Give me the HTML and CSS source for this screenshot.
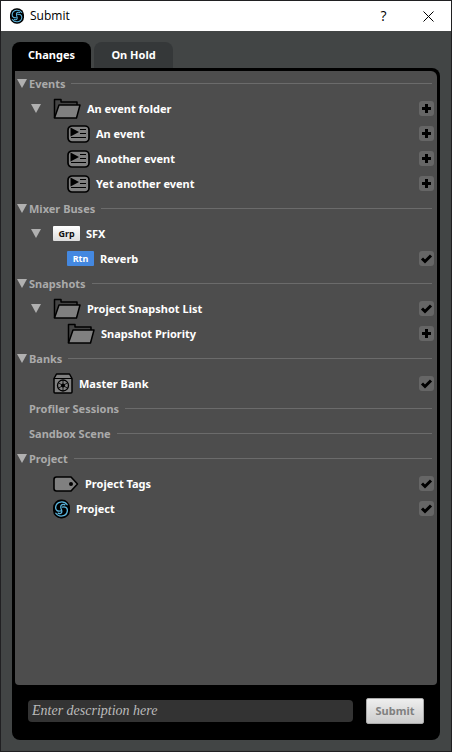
FILE: index.html
```html
<!DOCTYPE html>
<html lang="en">
<head>
<meta charset="utf-8">
<meta name="viewport" content="width=device-width, initial-scale=1">
<title>Submit</title>
<link rel="stylesheet" href="styles.css">
</head>
<body>
<svg class="sprite" aria-hidden="true">
  <symbol id="folder" viewBox="0 0 28 21">
    <path d="M1.500 20V1.500h6.500V4H24v3" fill="#444" stroke="#000" stroke-width="1.500" stroke-linejoin="round"/>
    <path d="M1.500 20L6 7h21L23.500 20z" fill="#808080" stroke="#000" stroke-width="1.500" stroke-linejoin="round"/>
  </symbol>
  <symbol id="event" viewBox="0 0 23 18">
    <rect x="1" y="1" width="21" height="16" rx="4" fill="#808080" stroke="#000" stroke-width="1.700"/>
    <path d="M3.500 2.500v9l8.500-4.500z" fill="#000"/>
    <path d="M13 4.500h6M13 8.500h6M4 12.500h15" stroke="#000" stroke-width="1.200"/>
  </symbol>
  <symbol id="bank" viewBox="0 0 20 21">
    <path d="M1 5.500L3.500 1h13L19 5.500V19q0 1-1 1H2q-1 0-1-1z" fill="#808080" stroke="#000" stroke-width="1.500" stroke-linejoin="round"/>
    <path d="M1 5.500h18" stroke="#000"/>
    <circle cx="10" cy="12.500" r="5.500" fill="none" stroke="#000" stroke-width="1.300"/>
    <path d="M10 7v11M5.200 9.700l9.600 5.600M14.800 9.700l-9.600 5.600" stroke="#000" stroke-width=".8"/>
    <circle cx="10" cy="12.500" r="2"/>
  </symbol>
  <symbol id="tag" viewBox="0 0 26 16">
    <path d="M3.500 1H18l6.500 7L18 15H3.500Q1 15 1 12.500v-9Q1 1 3.500 1z" fill="#808080" stroke="#000" stroke-width="1.600" stroke-linejoin="round"/>
    <circle cx="18" cy="8" r="2"/>
  </symbol>
  <symbol id="logo" viewBox="0 0 18 20">
    <rect width="18" height="20" rx="8.500" fill="#000"/>
    <g fill="none" stroke="#5ab4dc" stroke-width="1.400" stroke-linecap="round">
      <path d="M15 5.500C12 1 3.500 1.500 2.800 8C2.500 11.500 5.500 13 8 12"/>
      <path d="M3 14.500C6 19 14.500 18.500 15.200 12C15.500 8.500 12.500 7 10 8"/>
      <path d="M12.500 5.500C9.500 4.500 7.500 6 8.500 9.500C10.500 14 8.500 15.500 5.500 14.500"/>
    </g>
  </symbol>
  <symbol id="plus" viewBox="0 0 15 15"><path d="M7.500 3v9M3 7.500h9" stroke="#000" stroke-width="3"/></symbol>
  <symbol id="check" viewBox="0 0 15 15"><path d="M3 7.500l3 3 6-6" fill="none" stroke="#000" stroke-width="3"/></symbol>
</svg>

<div class="window">
  <header class="titlebar">
    <svg class="app-icon"><use href="#logo"/></svg>
    <h1 class="title">Submit</h1>
    <button class="caption" type="button" aria-label="Help">?</button>
    <button class="caption" type="button" aria-label="Close"><svg class="close" viewBox="0 0 11 11"><path d="M.5.5l10 10M10.500.5l-10 10" stroke="#000"/></svg></button>
  </header>

  <main class="content">
    <nav class="tabs">
      <button class="tab tab-active" type="button">Changes</button>
      <button class="tab" type="button">On Hold</button>
    </nav>

    <div class="panel">
      <div class="tree">
        <h2 class="section"><button class="arrow" type="button" aria-label="Collapse Events"></button>Events</h2>
        <div class="row"><button class="arrow" type="button" aria-label="Collapse An event folder"></button><svg class="folder"><use href="#folder"/></svg><span class="name">An event folder</span><button class="mark" type="button" aria-label="Add"><svg><use href="#plus"/></svg></button></div>
        <div class="row child"><svg class="event"><use href="#event"/></svg><span class="name">An event</span><button class="mark" type="button" aria-label="Add"><svg><use href="#plus"/></svg></button></div>
        <div class="row child"><svg class="event"><use href="#event"/></svg><span class="name">Another event</span><button class="mark" type="button" aria-label="Add"><svg><use href="#plus"/></svg></button></div>
        <div class="row child"><svg class="event"><use href="#event"/></svg><span class="name">Yet another event</span><button class="mark" type="button" aria-label="Add"><svg><use href="#plus"/></svg></button></div>

        <h2 class="section"><button class="arrow" type="button" aria-label="Collapse Mixer Buses"></button>Mixer Buses</h2>
        <div class="row"><button class="arrow" type="button" aria-label="Collapse SFX"></button><span class="badge">Grp</span><span class="name">SFX</span></div>
        <div class="row child"><span class="badge badge-return">Rtn</span><span class="name">Reverb</span><button class="mark" type="button" aria-label="Modified"><svg><use href="#check"/></svg></button></div>

        <h2 class="section"><button class="arrow" type="button" aria-label="Collapse Snapshots"></button>Snapshots</h2>
        <div class="row"><button class="arrow" type="button" aria-label="Collapse Project Snapshot List"></button><svg class="folder"><use href="#folder"/></svg><span class="name">Project Snapshot List</span><button class="mark" type="button" aria-label="Modified"><svg><use href="#check"/></svg></button></div>
        <div class="row child"><svg class="folder"><use href="#folder"/></svg><span class="name">Snapshot Priority</span><button class="mark" type="button" aria-label="Add"><svg><use href="#plus"/></svg></button></div>

        <h2 class="section"><button class="arrow" type="button" aria-label="Collapse Banks"></button>Banks</h2>
        <div class="row leaf"><svg class="bank"><use href="#bank"/></svg><span class="name">Master Bank</span><button class="mark" type="button" aria-label="Modified"><svg><use href="#check"/></svg></button></div>

        <h2 class="section section-empty">Profiler Sessions</h2>
        <h2 class="section section-empty">Sandbox Scene</h2>

        <h2 class="section"><button class="arrow" type="button" aria-label="Collapse Project"></button>Project</h2>
        <div class="row leaf"><svg class="tag"><use href="#tag"/></svg><span class="name">Project Tags</span><button class="mark" type="button" aria-label="Modified"><svg><use href="#check"/></svg></button></div>
        <div class="row leaf"><svg class="logo"><use href="#logo"/></svg><span class="name">Project</span><button class="mark" type="button" aria-label="Modified"><svg><use href="#check"/></svg></button></div>
      </div>

      <form class="footer">
        <input class="description" type="text" aria-label="Description" placeholder="Enter description here">
        <button class="submit" type="button">Submit</button>
      </form>
    </div>
  </main>
</div>
</body>
</html>
```
FILE: styles.css
```css
* { box-sizing: border-box; }

body {
  margin: 0;
  font: bold 11px/16px "Noto Sans", "Open Sans", sans-serif;
  color: #fff;
}

button {
  margin: 0;
  padding: 0;
  border: 0;
  background: none;
  font: inherit;
  color: inherit;
}

svg { display: block; flex: none; }

.sprite { position: absolute; width: 0; height: 0; }

.window {
  display: flex;
  flex-direction: column;
  min-height: 100vh;
  border: 1px solid #202022;
  background: #424545;
}

.titlebar {
  display: flex;
  align-items: center;
  height: 30px;
  padding-left: 9px;
  background: #fff;
  color: #000;
}

.app-icon { width: 14px; height: 16px; }

.title {
  flex: 1;
  margin: 0 0 0 6px;
  font: 12px/16px "Open Sans", sans-serif;
}

.caption {
  display: grid;
  place-items: center;
  width: 45px;
  height: 28px;
  font: 14px/16px "Open Sans", sans-serif;
}

.close { width: 11px; height: 11px; }

.content {
  flex: 1;
  display: flex;
  flex-direction: column;
  padding: 11px;
}

.tabs { display: flex; gap: 3px; }

.tab {
  width: 79px;
  height: 26px;
  border-radius: 8px 8px 0 0;
  background: #353839;
}

.tab-active { background: #000; }

.panel {
  flex: 1;
  display: flex;
  flex-direction: column;
  padding: 3px;
  border-radius: 0 8px 8px 8px;
  background: #000;
}

.tree {
  flex: 1;
  border-radius: 0 6px 4px 4px;
  background: #4d4d4d;
}

.section {
  display: flex;
  align-items: center;
  height: 25px;
  margin: 0;
  padding: 0 5px 0 2px;
  font: inherit;
  color: #aaa;
}

.section::after {
  content: "";
  flex: 1;
  height: 1px;
  margin-left: 6px;
  background: #6b6b6b;
}

.section-empty { padding-left: 14px; }

.arrow {
  flex: none;
  width: 10px;
  height: 9px;
  margin-right: 2px;
  background: #b0b0b0;
  clip-path: polygon(0 0, 100% 0, 50% 100%);
}

.row {
  display: flex;
  align-items: center;
  gap: 6px;
  height: 25px;
  padding: 0 3px 0 16px;
}

.row .arrow { margin-right: 6px; }

.row.leaf { padding-left: 38px; }

.row.child { padding-left: 52px; }

.name { flex: 1; }

.folder { width: 28px; height: 21px; }
.event { width: 23px; height: 18px; }
.bank { width: 20px; height: 21px; }
.tag { width: 26px; height: 16px; }
.logo { width: 17px; height: 20px; }

.badge {
  width: 27px;
  height: 15px;
  border-radius: 1px;
  background: linear-gradient(#fff, #ddd);
  font-size: 9px;
  line-height: 15px;
  text-align: center;
  color: #111;
}

.badge-return { background: #4488e0; color: #fff; }

.mark {
  width: 15px;
  height: 15px;
  border-radius: 3px;
  background: #666;
}

.mark svg { width: 15px; height: 15px; }

.footer {
  display: flex;
  align-items: center;
  gap: 13px;
  padding: 13px;
}

.description {
  flex: 1;
  min-width: 0;
  height: 22px;
  padding: 0 4px;
  border: 0;
  border-radius: 4px;
  background: #333;
  font: italic 14px/20px "Liberation Serif", serif;
  color: #ccc;
}

.description::placeholder { color: #bbb; opacity: 1; }

.submit {
  width: 58px;
  height: 26px;
  border: 1px solid #aaa;
  border-radius: 2px;
  background: linear-gradient(#eee, #ccc);
  color: #808080;
}
```
